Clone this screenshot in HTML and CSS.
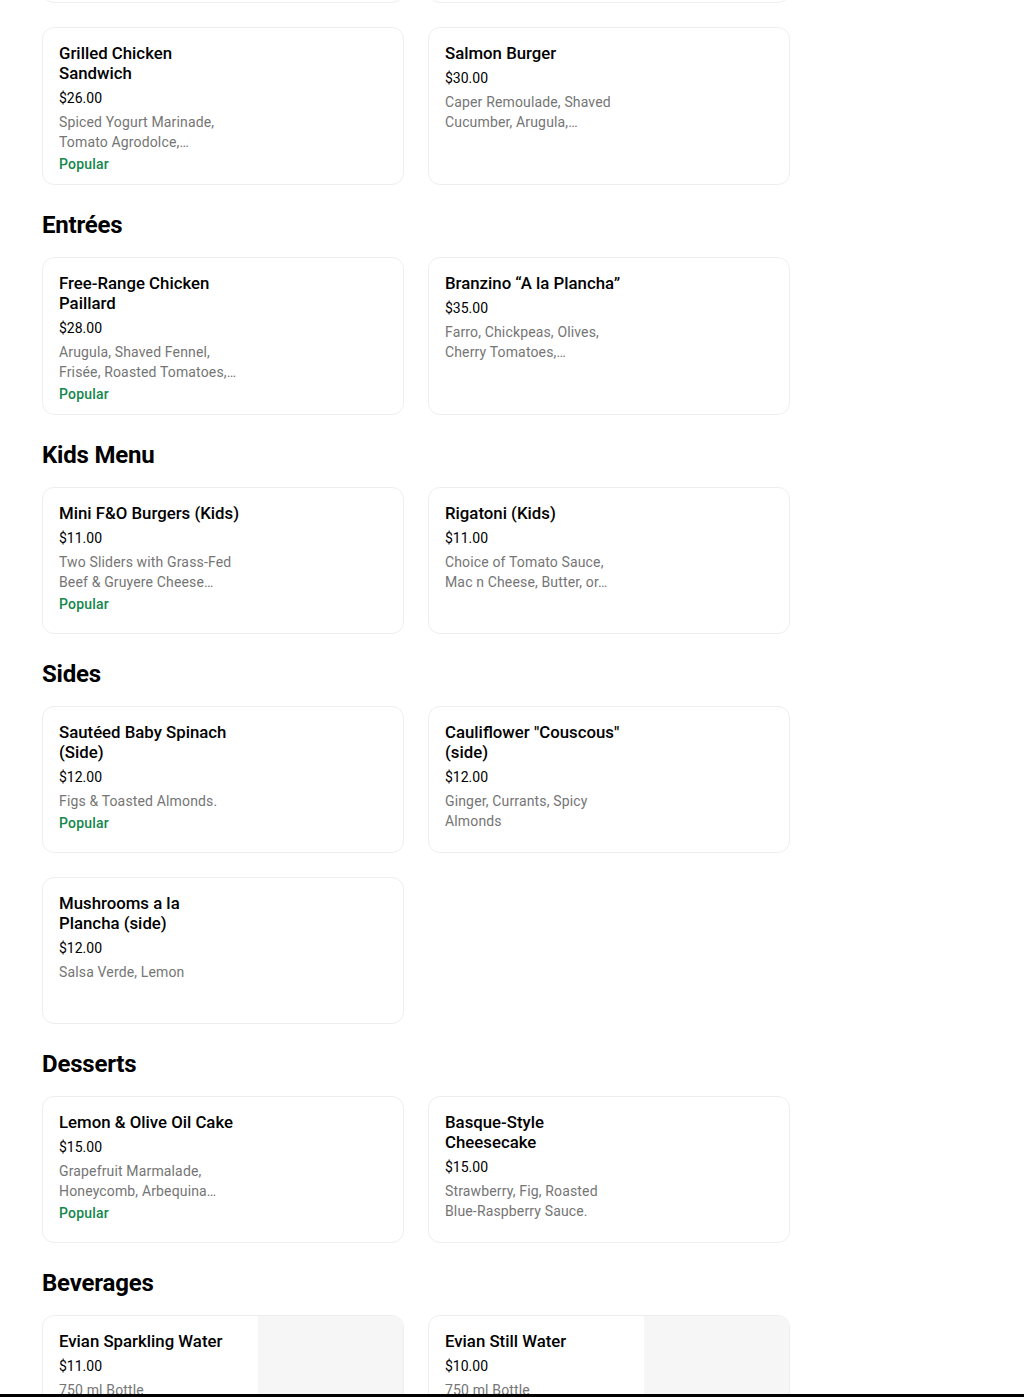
FILE: index.html
```html
<!DOCTYPE html>
<html lang="en">
<head>
<meta charset="utf-8">
<title>Menu</title>
<link rel="stylesheet" href="styles.css">
</head>
<body>
<main class="menu">
  <div class="grid grid-prev">
    <div class="card card-tail"></div>
    <div class="card card-tail"></div>
  </div>
  <div class="grid">
    <div class="card">
      <div class="info">
        <div class="title">Grilled Chicken Sandwich</div>
        <div class="price">$26.00</div>
        <div class="desc">Spiced Yogurt Marinade, Tomato Agrodolce,…</div>
        <div class="tag">Popular</div>
      </div>
      <div class="thumb"></div>
    </div>
    <div class="card">
      <div class="info">
        <div class="title">Salmon Burger</div>
        <div class="price">$30.00</div>
        <div class="desc">Caper Remoulade, Shaved Cucumber, Arugula,…</div>
      </div>
      <div class="thumb"></div>
    </div>
  </div>

  <section class="section">
    <h2 class="heading">Entrées</h2>
    <div class="grid">
      <div class="card">
        <div class="info">
          <div class="title">Free-Range Chicken Paillard</div>
          <div class="price">$28.00</div>
          <div class="desc">Arugula, Shaved Fennel, Frisée, Roasted Tomatoes,…</div>
          <div class="tag">Popular</div>
        </div>
        <div class="thumb"></div>
      </div>
      <div class="card">
        <div class="info">
          <div class="title">Branzino “A la Plancha”</div>
          <div class="price">$35.00</div>
          <div class="desc">Farro, Chickpeas, Olives, Cherry Tomatoes,…</div>
        </div>
        <div class="thumb"></div>
      </div>
    </div>
  </section>

  <section class="section">
    <h2 class="heading">Kids Menu</h2>
    <div class="grid">
      <div class="card">
        <div class="info">
          <div class="title">Mini F&amp;O Burgers (Kids)</div>
          <div class="price">$11.00</div>
          <div class="desc">Two Sliders with Grass-Fed Beef &amp; Gruyere Cheese…</div>
          <div class="tag">Popular</div>
        </div>
        <div class="thumb"></div>
      </div>
      <div class="card">
        <div class="info">
          <div class="title">Rigatoni (Kids)</div>
          <div class="price">$11.00</div>
          <div class="desc">Choice of Tomato Sauce, Mac n Cheese, Butter, or…</div>
        </div>
        <div class="thumb"></div>
      </div>
    </div>
  </section>

  <section class="section">
    <h2 class="heading">Sides</h2>
    <div class="grid">
      <div class="card">
        <div class="info">
          <div class="title">Sautéed Baby Spinach (Side)</div>
          <div class="price">$12.00</div>
          <div class="desc">Figs &amp; Toasted Almonds.</div>
          <div class="tag">Popular</div>
        </div>
        <div class="thumb"></div>
      </div>
      <div class="card">
        <div class="info">
          <div class="title">Cauliflower "Couscous" (side)</div>
          <div class="price">$12.00</div>
          <div class="desc">Ginger, Currants, Spicy Almonds</div>
        </div>
        <div class="thumb"></div>
      </div>
      <div class="card">
        <div class="info">
          <div class="title">Mushrooms a la Plancha (side)</div>
          <div class="price">$12.00</div>
          <div class="desc">Salsa Verde, Lemon</div>
        </div>
        <div class="thumb"></div>
      </div>
    </div>
  </section>

  <section class="section">
    <h2 class="heading">Desserts</h2>
    <div class="grid">
      <div class="card">
        <div class="info">
          <div class="title">Lemon &amp; Olive Oil Cake</div>
          <div class="price">$15.00</div>
          <div class="desc">Grapefruit Marmalade, Honeycomb, Arbequina…</div>
          <div class="tag">Popular</div>
        </div>
        <div class="thumb"></div>
      </div>
      <div class="card">
        <div class="info">
          <div class="title">Basque-Style Cheesecake</div>
          <div class="price">$15.00</div>
          <div class="desc">Strawberry, Fig, Roasted Blue-Raspberry Sauce.</div>
        </div>
        <div class="thumb"></div>
      </div>
    </div>
  </section>

  <section class="section">
    <h2 class="heading">Beverages</h2>
    <div class="grid">
      <div class="card">
        <div class="info">
          <div class="title">Evian Sparkling Water</div>
          <div class="price">$11.00</div>
          <div class="desc">750 ml Bottle</div>
        </div>
        <div class="thumb thumb-img"></div>
      </div>
      <div class="card">
        <div class="info">
          <div class="title">Evian Still Water</div>
          <div class="price">$10.00</div>
          <div class="desc">750 ml Bottle</div>
        </div>
        <div class="thumb thumb-img"></div>
      </div>
    </div>
  </section>
</main>
<div class="bottom-edge"></div>
</body>
</html>
```

FILE: styles.css
```css
html, body {
  margin: 0;
  padding: 0;
  background: #ffffff;
}

body {
  font-family: Roboto, "Noto Sans", sans-serif;
  color: #000000;
  overflow: hidden;
  height: 1397px;
}

.menu {
  width: 748px;
  margin-left: 42px;
  margin-top: -144px;
}

.grid {
  display: grid;
  grid-template-columns: 362px 362px;
  column-gap: 24px;
  row-gap: 24px;
}

.grid-prev {
  margin-bottom: 24px;
}

.card {
  display: flex;
  min-height: 145px;
  border: 1px solid #eeeeee;
  border-radius: 12px;
  overflow: hidden;
  background: #ffffff;
}

.card-tail {
  height: 145px;
}

.info {
  flex: 1;
  min-width: 0;
  padding: 15px 16px 10px 16px;
}

.thumb {
  width: 145px;
  flex: none;
}

.thumb-img {
  background: #f6f6f6;
}

.title {
  font-size: 16.8px;
  line-height: 20px;
  font-weight: 500;
  color: #000000;
}

.price {
  margin-top: 5px;
  font-size: 14px;
  line-height: 20px;
  font-weight: 400;
  color: #000000;
}

.desc {
  margin-top: 4px;
  font-size: 14px;
  line-height: 20px;
  letter-spacing: 0.15px;
  color: #757575;
  display: -webkit-box;
  -webkit-box-orient: vertical;
  -webkit-line-clamp: 2;
  overflow: hidden;
}

.tag {
  margin-top: 2px;
  font-size: 14px;
  line-height: 20px;
  font-weight: 500;
  letter-spacing: 0.2px;
  color: #14874c;
}

.section {
  margin-top: 24px;
}

.heading {
  margin: 0 0 16px 0;
  font-size: 24px;
  line-height: 32px;
  font-weight: 700;
  letter-spacing: -0.2px;
}

.bottom-edge {
  position: fixed;
  left: 0;
  right: 0;
  bottom: 0;
  height: 3px;
  background: #000000;
}
```
